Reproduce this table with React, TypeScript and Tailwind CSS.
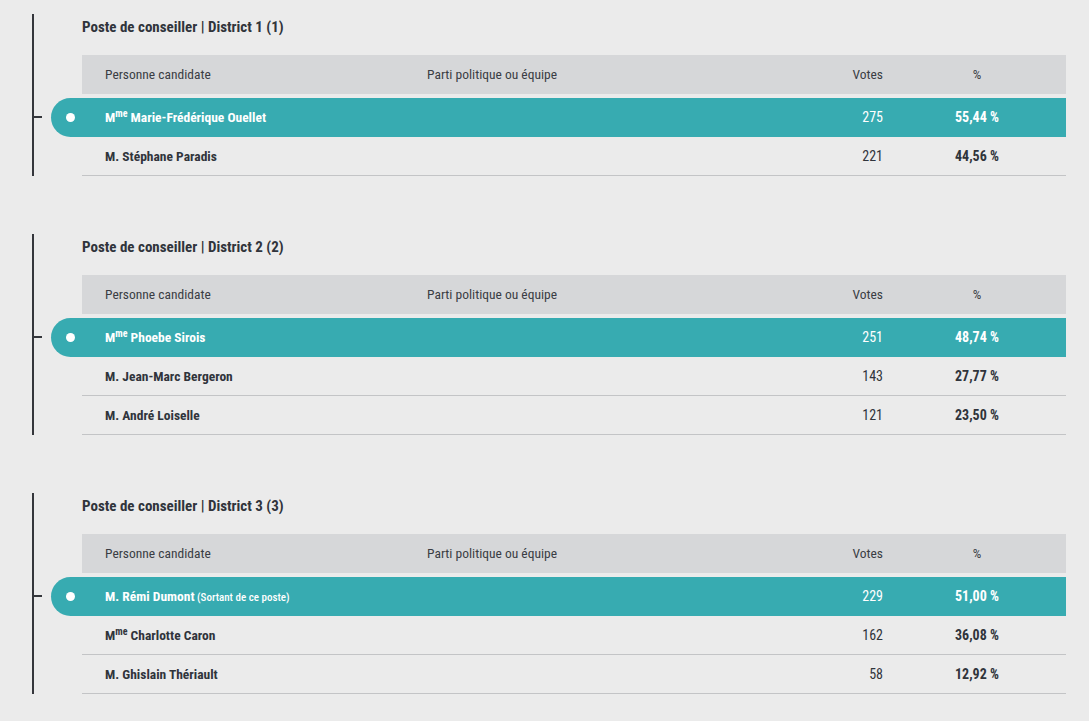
import React from "react";

type Cand = { title: "M." | "Mme"; name: string; note?: string; votes: string; pct: string };
type District = { label: string; rows: Cand[] };

const data: District[] = [
  {
    label: "Poste de conseiller | District 1 (1)",
    rows: [
      { title: "Mme", name: "Marie-Frédérique Ouellet", votes: "275", pct: "55,44 %" },
      { title: "M.", name: "Stéphane Paradis", votes: "221", pct: "44,56 %" },
    ],
  },
  {
    label: "Poste de conseiller | District 2 (2)",
    rows: [
      { title: "Mme", name: "Phoebe Sirois", votes: "251", pct: "48,74 %" },
      { title: "M.", name: "Jean-Marc Bergeron", votes: "143", pct: "27,77 %" },
      { title: "M.", name: "André Loiselle", votes: "121", pct: "23,50 %" },
    ],
  },
  {
    label: "Poste de conseiller | District 3 (3)",
    rows: [
      { title: "M.", name: "Rémi Dumont", note: "(Sortant de ce poste)", votes: "229", pct: "51,00 %" },
      { title: "Mme", name: "Charlotte Caron", votes: "162", pct: "36,08 %" },
      { title: "M.", name: "Ghislain Thériault", votes: "58", pct: "12,92 %" },
    ],
  },
];

const font = {
  fontFamily: '"Roboto Condensed", "Liberation Sans Narrow", "Arial Narrow", "DejaVu Sans Condensed", sans-serif',
};

function Name({ c }: { c: Cand }) {
  return (
    <span className="font-bold whitespace-nowrap text-[13.5px]">
      {c.title === "Mme" ? (
        <>
          M<sup className="text-[10px] font-bold">me</sup>
        </>
      ) : (
        "M."
      )}{" "}
      {c.name}
      {c.note && <span className="text-[11px] font-medium"> {c.note}</span>}
    </span>
  );
}

function Section({ d }: { d: District }) {
  return (
    <section className="border-l-2 border-[#34363b] pl-[48px] pr-[23px]">
      <h2 className="mt-[2px] h-[22px] leading-[22px] text-[15px] font-bold text-[#30343b] mb-[17px]">{d.label}</h2>
      <div className="flex items-center h-[39px] bg-[#d6d7d9] text-[13.5px] text-[#3a3d44]">
        <div className="w-[345px] pl-[23px]">Personne candidate</div>
        <div className="flex-1">Parti politique ou équipe</div>
        <div className="w-[100px] text-right">Votes</div>
        <div className="w-[44px]" />
        <div className="w-[100px] text-center">%</div>
        <div className="w-[39px]" />
      </div>
      {d.rows.map((c, i) =>
        i === 0 ? (
          <div
            key={i}
            className="relative flex items-center h-[39px] mt-[4px] ml-[-31px] pl-[31px] bg-[#37abb1] rounded-l-full text-white text-[14px]"
          >
            <span className="absolute left-[-19px] top-[18px] w-[10px] h-[2px] bg-[#34363b]" />
            <span className="absolute left-[15px] top-[15px] w-[9px] h-[9px] rounded-full bg-white" />
            <div className="w-[345px] pl-[23px]">
              <Name c={c} />
            </div>
            <div className="flex-1" />
            <div className="w-[100px] text-right">{c.votes}</div>
            <div className="w-[44px]" />
            <div className="w-[100px] text-center font-bold">{c.pct}</div>
            <div className="w-[39px]" />
          </div>
        ) : (
          <div
            key={i}
            className="flex items-center h-[39px] border-b border-[#c3c4c6] text-[14px] text-[#30343b]"
          >
            <div className="w-[345px] pl-[23px]">
              <Name c={c} />
            </div>
            <div className="flex-1" />
            <div className="w-[100px] text-right">{c.votes}</div>
            <div className="w-[44px]" />
            <div className="w-[100px] text-center font-bold">{c.pct}</div>
            <div className="w-[39px]" />
          </div>
        )
      )}
    </section>
  );
}

export default function App() {
  return (
    <div className="min-h-[721px] bg-[#ebebeb] pt-[14px] pl-[32px] flex flex-col gap-[58px]" style={font}>
      {data.map((d, i) => (
        <Section key={i} d={d} />
      ))}
    </div>
  );
}
